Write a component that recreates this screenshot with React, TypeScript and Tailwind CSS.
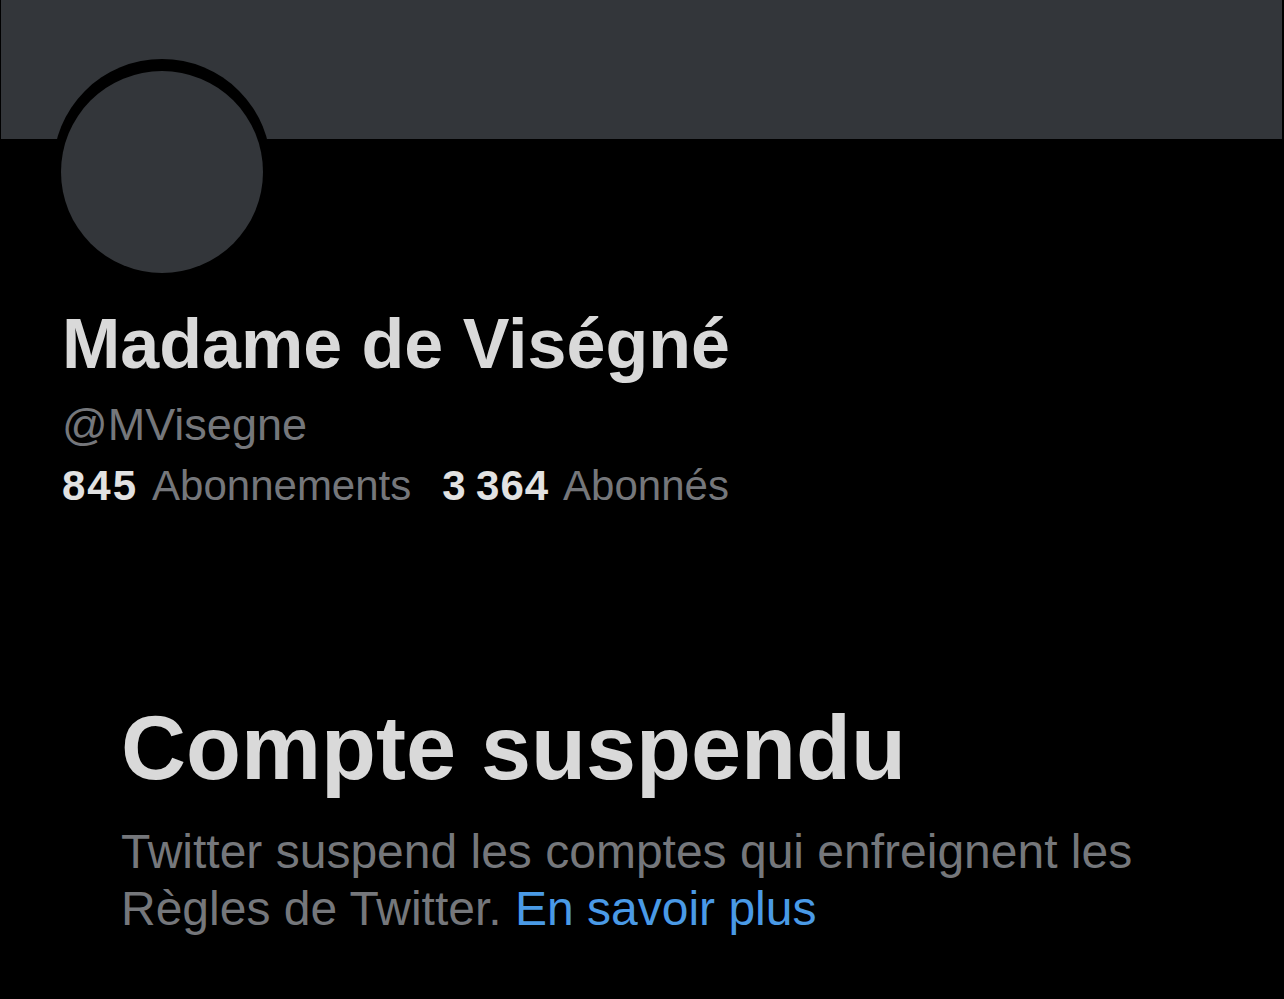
export default function App() {
    return (
        <div className="min-h-screen w-full bg-black font-['Liberation_Sans',Arial,sans-serif] text-[#d9d9d9]">
            {/* Banner */}
            <div className="ml-[1px] mr-[2px] h-[139px] bg-[#33363a]" />

            {/* Avatar */}
            <div className="-mt-[80px] ml-[53px] size-[218px] rounded-full bg-black pl-[8px] pt-[12px]">
                <div className="size-[202px] rounded-full bg-[#33363a]" />
            </div>

            {/* Profile info */}
            <div className="pl-[62px]">
                <h1 className="mt-[32px] text-[70px] font-bold leading-none">Madame de Viségné</h1>
                <p className="mt-[23px] text-[45px] leading-none text-[#75777b]">@MVisegne</p>
                <div className="mt-[18px] flex items-baseline gap-[31px] text-[42px] leading-none">
                    <span className="flex items-baseline gap-[14px]">
                        <span className="font-bold tracking-[2px] text-[#e2e2e2]">845</span>
                        <span className="text-[#75777b]">Abonnements</span>
                    </span>
                    <span className="flex items-baseline gap-[14px]">
                        <span className="font-bold tracking-[1px] text-[#e2e2e2]">3&#8201;364</span>
                        <span className="text-[#75777b]">Abonnés</span>
                    </span>
                </div>
            </div>

            {/* Suspended notice */}
            <div className="pl-[121px]">
                <h2 className="mt-[196px] text-[90px] font-bold leading-none">Compte suspendu</h2>
                <p className="mt-[30px] max-w-[1045px] text-[48px] leading-[57px] text-[#75777b]">
                    Twitter suspend les comptes qui enfreignent les Règles de Twitter.{" "}
                    <a href="#" className="text-[#4a9ae6]">En savoir plus</a>
                </p>
            </div>
        </div>
    );
}
